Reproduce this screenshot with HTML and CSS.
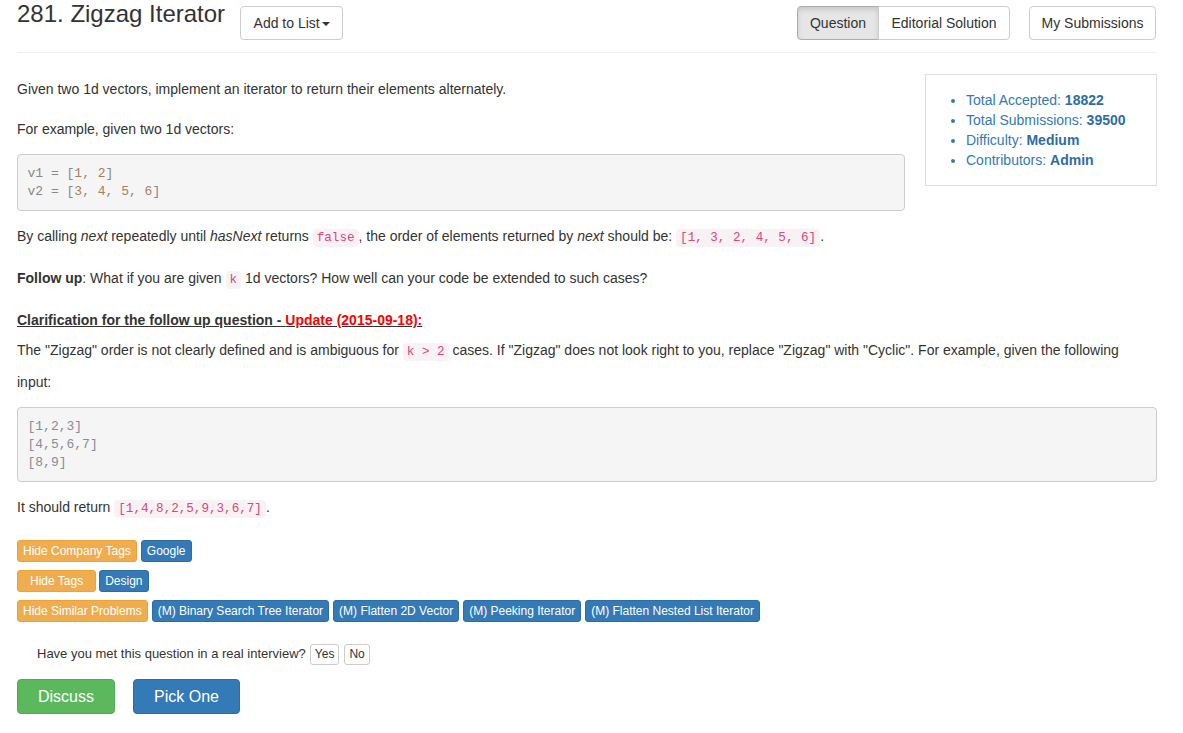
FILE: index.html
```html
<!DOCTYPE html>
<html>
<head>
<meta charset="utf-8">
<title>281. Zigzag Iterator</title>
<link rel="stylesheet" href="styles.css">
</head>
<body>
<div class="container">
  <div class="header">
    <h3 class="title">281. Zigzag Iterator</h3>
    <button class="btn add-list">Add to List<span class="caret"></span></button>
    <div class="spacer"></div>
    <div class="btn-group">
      <button class="btn active">Question</button><button class="btn">Editorial Solution</button>
    </div>
    <button class="btn subs">My Submissions</button>
  </div>
  <hr class="rule">

  <div class="content">
    <div class="stats">
      <ul>
        <li>Total Accepted: <b>18822</b></li>
        <li>Total Submissions: <b>39500</b></li>
        <li>Difficulty: <b>Medium</b></li>
        <li>Contributors: <b>Admin</b></li>
      </ul>
    </div>
    <p>Given two 1d vectors, implement an iterator to return their elements alternately.</p>
    <p>For example, given two 1d vectors:</p>
    <pre class="pre"><span class="pl">v1 = [</span><span class="num">1</span><span class="pl">, </span><span class="num">2</span><span class="pl">]</span>
<span class="pl">v2 = [</span><span class="num">3</span><span class="pl">, </span><span class="num">4</span><span class="pl">, </span><span class="num">5</span><span class="pl">, </span><span class="num">6</span><span class="pl">]</span></pre>
    <p>By calling <i>next</i> repeatedly until <i>hasNext</i> returns <code>false</code>, the order of elements returned by <i>next</i> should be: <code>[1, 3, 2, 4, 5, 6]</code>.</p>
    <p><b>Follow up</b>: What if you are given <code>k</code> 1d vectors? How well can your code be extended to such cases?</p>
    <p class="clar"><b class="u">Clarification for the follow up question - <span class="red">Update (2015-09-18):</span></b><br>The "Zigzag" order is not clearly defined and is ambiguous for <code>k &gt; 2</code> cases. If "Zigzag" does not look right to you, replace "Zigzag" with "Cyclic". For example, given the following input:</p>
    <pre class="pre pre2">[1,2,3]
[4,5,6,7]
[8,9]</pre>
    <p>It should return <code>[1,4,8,2,5,9,3,6,7]</code>.</p>

    <div class="tags first">
      <span class="tag warn">Hide Company Tags</span>
      <span class="tag prim">Google</span>
    </div>
    <div class="tags">
      <span class="tag warn wide">Hide Tags</span>
      <span class="tag prim">Design</span>
    </div>
    <div class="tags">
      <span class="tag warn">Hide Similar Problems</span>
      <span class="tag prim">(M) Binary Search Tree Iterator</span>
      <span class="tag prim">(M) Flatten 2D Vector</span>
      <span class="tag prim">(M) Peeking Iterator</span>
      <span class="tag prim">(M) Flatten Nested List Iterator</span>
    </div>

    <div class="interview">
      <span>Have you met this question in a real interview?</span>
      <button class="xs">Yes</button>
      <button class="xs">No</button>
    </div>

    <div class="actions">
      <button class="big green">Discuss</button>
      <button class="big blue">Pick One</button>
    </div>
  </div>
</div>
</body>
</html>
```

FILE: styles.css
```css
* { box-sizing: border-box; }
body {
  margin: 0;
  font-family: "Liberation Sans", Arial, sans-serif;
  font-size: 14px;
  color: #333;
  background: #fff;
}
.container {
  width: 1140px;
  margin-left: 17px;
}
.header {
  display: flex;
  align-items: flex-start;
}
.title {
  margin: 0;
  font-size: 24px;
  font-weight: normal;
  line-height: 28px;
  color: #333;
  white-space: nowrap;
}
.btn {
  font-family: inherit;
  font-size: 14px;
  line-height: 20px;
  height: 34px;
  padding: 6px 0;
  background: #fff;
  color: #333;
  border: 1px solid #ccc;
  border-radius: 4px;
  margin-top: 6px;
  white-space: nowrap;
  text-align: center;
}
.add-list { margin-left: 15px; width: 103px; }
.caret {
  display: inline-block;
  width: 0;
  height: 0;
  margin-left: 2px;
  vertical-align: middle;
  border-top: 4px solid #333;
  border-left: 4px solid transparent;
  border-right: 4px solid transparent;
}
.spacer { flex: 1; }
.btn-group { display: flex; margin-top: 6px; }
.btn-group .btn { margin-top: 0; }
.btn-group .btn:first-child { border-radius: 4px 0 0 4px; width: 82px; }
.btn-group .btn:last-child { border-radius: 0 4px 4px 0; margin-left: -1px; width: 132px; }
.btn.active {
  background: #e6e6e6;
  border-color: #adadad;
  box-shadow: inset 0 3px 5px rgba(0,0,0,0.125);
}
.subs { margin-left: 19px; margin-right: 1px; width: 127px; }
.rule {
  border: 0;
  border-top: 1px solid #eee;
  margin: 12px 0 21px;
}
.content p {
  margin: 0 0 10px;
  line-height: 30px;
}
.content p.clar { padding-right: 20px; }
.stats {
  float: right;
  width: 232px;
  margin-left: 20px;
  border: 1px solid #ddd;
  padding: 15px 15px;
  color: #337ab7;
}
.stats ul {
  margin: 0;
  padding-left: 25px;
  line-height: 20px;
}
.stats b { color: #2e6da4; }
.pre {
  overflow: auto;
  margin: 0 0 10px;
  padding: 9.5px;
  font-family: "Liberation Mono", "Courier New", monospace;
  font-size: 13px;
  line-height: 18px;
  color: #888;
  background: #f5f5f5;
  border: 1px solid #ccc;
  border-radius: 4px;
}
.pre .pl { color: #888; }
.pre .num { color: #a67f59; }
.pre2 { color: #8a8a9a; }
code {
  font-family: "Liberation Mono", "Courier New", monospace;
  font-size: 90%;
  padding: 2px 4px;
  color: #e0457b;
  background: #f9f2f4;
  border-radius: 4px;
}
.u { text-decoration: underline; }
.red { color: #ff0000; }
.tags {
  display: flex;
  gap: 4px;
  margin-top: 8px;
}
.tags.first { margin-top: 16px; }
.tag {
  display: inline-block;
  font-size: 12px;
  line-height: 18px;
  padding: 1px 5px;
  border: 1px solid transparent;
  border-radius: 3px;
  color: #fff;
  white-space: nowrap;
}
.tag.warn { background: #f0ad4e; border-color: #eea236; }
.tag.prim { background: #337ab7; border-color: #2e6da4; }
.tag.wide { padding: 1px 12px; margin-right: -1px; }
.interview {
  margin-top: 21px;
  padding-left: 20px;
  display: flex;
  align-items: center;
  line-height: 22px;
  font-size: 13px;
  color: #333;
}
.interview span { margin-right: 4px; }
.xs {
  font-family: inherit;
  font-size: 12px;
  line-height: 17px;
  padding: 1px 4px;
  background: #fff;
  color: #333;
  border: 1px solid #ccc;
  border-radius: 3px;
  margin-left: 0;
  margin-right: 5px;
}
.actions {
  display: flex;
  gap: 18px;
  margin-top: 14px;
}
.big {
  font-family: inherit;
  font-size: 16px;
  line-height: 21px;
  height: 35px;
  padding: 6px 0;
  border: 1px solid transparent;
  border-radius: 4px;
  color: #fff;
  text-align: center;
}
.big.green { background: #5cb85c; border-color: #4cae4c; width: 98px; }
.big.blue { background: #337ab7; border-color: #2e6da4; width: 107px; }
```
